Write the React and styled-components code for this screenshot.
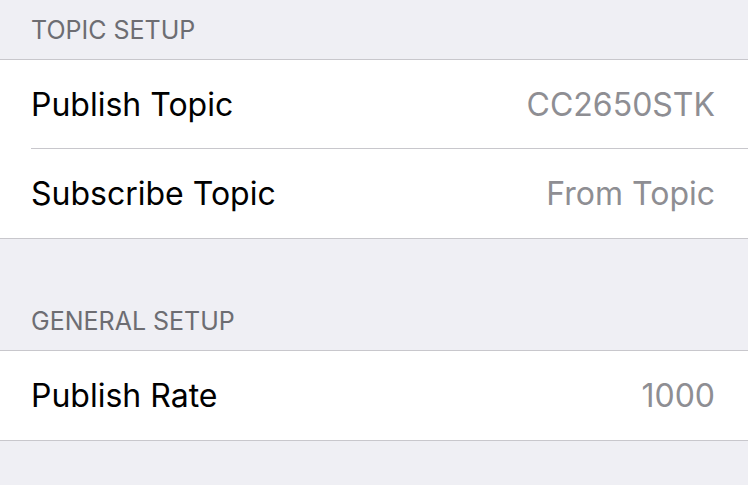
import React from "react";
import styled, { createGlobalStyle } from "styled-components";

const Global = createGlobalStyle`
  html, body {
    margin: 0;
    padding: 0;
    background: #efeff4;
  }
  body {
    font-family: Inter, "Liberation Sans", Arial, sans-serif;
    -webkit-font-smoothing: antialiased;
  }
`;

const Page = styled.div`
  width: 748px;
  height: 485px;
  background: #efeff4;
  overflow: hidden;
`;

const SectionHeader = styled.div`
  height: ${({ tall }) => (tall ? "111px" : "59px")};
  display: flex;
  align-items: flex-end;
  padding: 0 31px 14px;
  box-sizing: border-box;
  font-size: 25px;
  line-height: 1.2;
  color: #6d6d72;
  text-transform: uppercase;
`;

const Group = styled.div`
  background: #fff;
  border-top: 1px solid #c8c7cc;
  border-bottom: 1px solid #c8c7cc;
  padding-bottom: 1px;
`;

const Row = styled.div`
  height: 88px;
  display: flex;
  align-items: center;
  justify-content: space-between;
  padding: 0 33px 0 31px;
  font-size: 32px;
  color: #000;
`;

const Separator = styled.div`
  height: 1px;
  margin-left: 31px;
  background: #c8c7cc;
`;

const Value = styled.span`
  color: #8e8e93;
`;

const sections = [
  {
    title: "Topic Setup",
    rows: [
      ["Publish Topic", "CC2650STK"],
      ["Subscribe Topic", "From Topic"],
    ],
  },
  {
    title: "General Setup",
    tall: true,
    rows: [["Publish Rate", "1000"]],
  },
];

export default function App() {
  return (
    <Page>
      <Global />
      {sections.map((s) => (
        <section key={s.title}>
          <SectionHeader tall={s.tall}>{s.title}</SectionHeader>
          <Group>
            {s.rows.map(([label, value], i) => (
              <React.Fragment key={label}>
                {i > 0 && <Separator />}
                <Row>
                  <span>{label}</span>
                  <Value>{value}</Value>
                </Row>
              </React.Fragment>
            ))}
          </Group>
        </section>
      ))}
    </Page>
  );
}
